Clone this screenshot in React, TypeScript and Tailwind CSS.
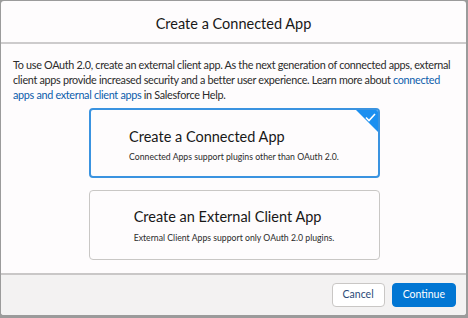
import React from "react";

const font = { fontFamily: 'Lato, "Noto Sans", sans-serif' };

export default function App() {
  return (
    <div className="w-[468px] h-[318px] bg-[#9b9b9b] pt-px pl-px pr-[2px] pb-[3px]" style={font}>
      <div className="w-full h-full bg-[#fefcfd] rounded-[3px] flex flex-col overflow-hidden">
        <div className="h-[43px] shrink-0 flex items-center justify-center border-b-2 border-[#cdcbcc] pt-[4px]">
          <span className="text-[14.5px] text-[#181818]">Create a Connected App</span>
        </div>
        <div className="flex-1 px-[12px] pt-[13px] flex flex-col">
          <p className="text-[10.8px] leading-[15px] text-[#2b2b2b] tracking-[-0.3px]">
            To use OAuth 2.0, create an external client app. As the next generation of connected apps, external
            client apps provide increased security and a better user experience. Learn more about{" "}
            <span className="text-[#0b5cab]">connected apps and external client apps</span> in Salesforce Help.
          </p>
          <div className="mt-[6px] flex flex-col items-center gap-[12px] pl-[1px]">
            <div className="relative w-[291px] h-[70px] rounded-[4px] border-2 border-[#3a93e0] flex items-center justify-center overflow-hidden pt-[4px]">
              <div className="flex flex-col">
                <span className="text-[14.5px] leading-[20px] text-[#181818]">Create a Connected App</span>
                <span className="text-[8.7px] leading-[14px] text-[#2b2b2b] mt-[3px]">Connected Apps support plugins other than OAuth 2.0.</span>
              </div>
              <div className="absolute top-0 right-0 w-[22px] h-[22px]">
                <svg width="22" height="22" viewBox="0 0 22 22">
                  <polygon points="0,0 22,0 22,22" fill="#1b8ff0" />
                  <polyline points="10,7.5 13,10.5 19,4" fill="none" stroke="white" strokeWidth="1.6" />
                </svg>
              </div>
            </div>
            <div className="w-[291px] h-[70px] rounded-[4px] border border-[#c9c7c5] flex items-center justify-center pt-[2px]">
              <div className="flex flex-col">
                <span className="text-[14.5px] leading-[20px] text-[#181818]">Create an External Client App</span>
                <span className="text-[8.7px] leading-[14px] text-[#2b2b2b] mt-[4px]">External Client Apps support only OAuth 2.0 plugins.</span>
              </div>
            </div>
          </div>
        </div>
        <div className="h-[42px] shrink-0 bg-[#f3f2f2] border-t-2 border-[#c9c7c7] flex items-center justify-end gap-[7px] pr-[10px]">
          <button className="h-[24px] px-[10px] rounded-[4px] border border-[#c9c7c5] bg-white text-[10.5px] text-[#2a4a78]">Cancel</button>
          <button className="h-[24px] px-[10px] rounded-[4px] border border-[#0176d3] bg-[#0176d3] text-[10.5px] text-white">Continue</button>
        </div>
      </div>
    </div>
  );
}
